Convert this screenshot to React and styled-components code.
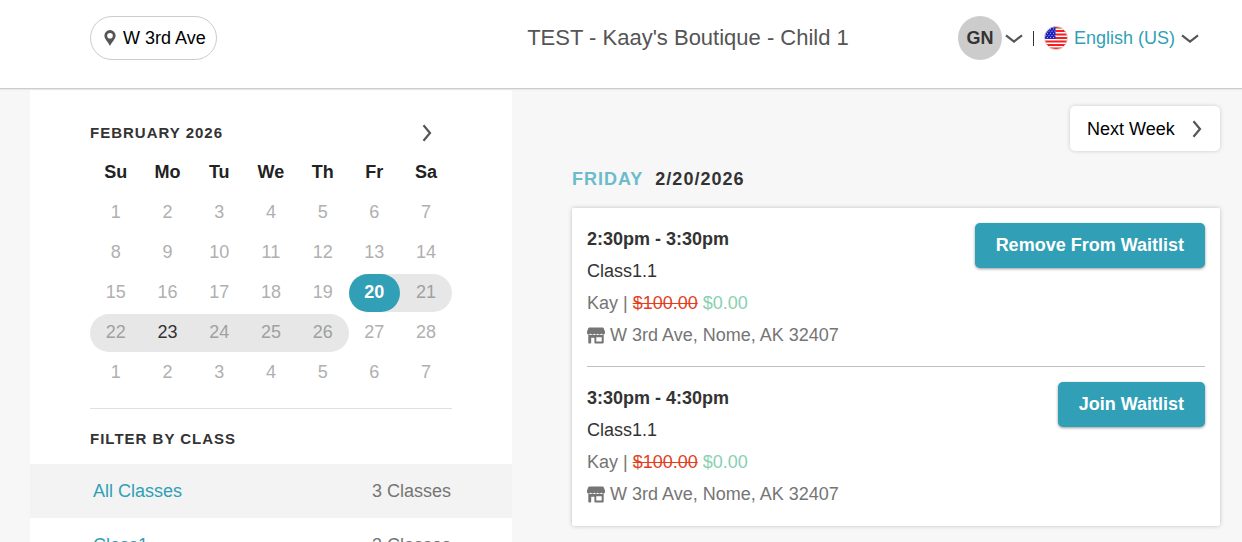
import styled, { createGlobalStyle } from "styled-components"

const GlobalStyle = createGlobalStyle`
    *{
        box-sizing: border-box;
    }
    body{
        margin: 0;
        background-color: #f7f7f7;
        color: #333333;
        font-family: "Liberation Sans", Arial, sans-serif;
        font-size: 18px;
        line-height: 32px;
    }
    button{
        font: inherit;
        color: inherit;
        border: none;
        padding: 0;
        background: none;
        cursor: pointer;
    }
    a{
        color: #319fb6;
        text-decoration: none;
    }
    svg{
        display: block;
        flex-shrink: 0;
    }
`

const Page = styled.div`
    min-height: 100vh;
`

const Header = styled.header`
    display: grid;
    grid-template-columns: 328px 1fr auto;
    align-items: center;
    gap: 16px;
    height: 89px;
    padding: 0 43px 12px 90px;
    background-color: #ffffff;
    border-bottom: 1px solid #cccccc;
    box-shadow: 0 1px 1px #e8e8e8;
    position: relative;
`

const LocationButton = styled.button`
    display: flex;
    align-items: center;
    gap: 7px;
    height: 44px;
    width: 127px;
    padding: 0 13px;
    border: 1px solid #cccccc;
    border-radius: 22px;
    color: #000000;
    white-space: nowrap;
`

const Title = styled.h1`
    margin: 0;
    font-size: 22px;
    font-weight: 400;
    text-align: center;
    color: #555555;
`

const HeaderActions = styled.div`
    display: flex;
    align-items: center;
    gap: 10px;
`

const MenuButton = styled.button`
    display: flex;
    align-items: center;
    gap: ${props => props.$gap}px;
    color: #319fb6;
`

const Avatar = styled.span`
    width: 44px;
    height: 44px;
    border-radius: 50%;
    background-color: #cccccc;
    color: #333333;
    font-weight: 700;
    line-height: 44px;
    text-align: center;
`

const Separator = styled.span`
    width: 1px;
    height: 15px;
    background-color: #333333;
`

const Content = styled.div`
    display: grid;
    grid-template-columns: 482px 1fr;
    padding-left: 30px;
    min-height: calc(100vh - 89px);
`

const Sidebar = styled.aside`
    background-color: #ffffff;
`

const CalendarSection = styled.section`
    margin: 0 60px;
    padding: 26px 0 16px;
    border-bottom: 1px solid #e0e0e0;
`

const CalendarHeader = styled.div`
    display: flex;
    justify-content: space-between;
    align-items: center;
    height: 35px;
    margin-bottom: 2px;
    padding-right: 16px;
`

const SectionTitle = styled.h2`
    margin: 0;
    font-size: 15px;
    font-weight: 700;
    line-height: 32px;
    letter-spacing: 1px;
    text-transform: uppercase;
`

const ArrowButton = styled.button`
    padding: 8px;
    margin-right: -4px;
`

const CalendarTable = styled.table`
    width: 100%;
    table-layout: fixed;
    border-collapse: collapse;
    text-align: center;
    th, td{
        height: 40px;
        padding: 0;
    }
    th{
        color: #222222;
    }
    td{
        padding-top: 2px;
    }
`

const Slot = styled.div`
    height: 38px;
    background-color: ${props => props.$range ? "#e7e7e7" : "transparent"};
    border-radius: ${props => props.$range === "start" ? "19px 0 0 19px" : props.$range === "end" ? "0 19px 19px 0" : "0"};
`

const DayButton = styled.button`
    width: 100%;
    height: 38px;
    padding-bottom: 2px;
    border-radius: 19px;
    line-height: 36px;
    color: ${props => props.$selected ? "#ffffff" : props.$today ? "#333333" : props.$range ? "#a0a0a0" : "#b0b0b0"};
    font-weight: ${props => props.$selected ? 700 : 400};
    background-color: ${props => props.$selected ? "#319fb6" : "transparent"};
`

const FilterSection = styled.section`
    padding-top: 14px;
`

const FilterTitle = styled(SectionTitle)`
    padding: 0 60px;
    margin-bottom: 9px;
`

const FilterList = styled.ul`
    margin: 0;
    padding: 0;
    list-style: none;
`

const FilterRow = styled.li`
    display: flex;
    justify-content: space-between;
    height: 54px;
    padding: 0 61px 0 63px;
    line-height: 54px;
    color: #757575;
    background-color: ${props => props.$active ? "#f3f3f3" : "#ffffff"};
`

const Main = styled.main`
    display: flex;
    flex-direction: column;
    padding: 17px 22px 16px 60px;
`

const NextWeekButton = styled.button`
    display: flex;
    align-items: center;
    justify-content: space-between;
    align-self: flex-end;
    width: 150px;
    height: 45px;
    padding: 0 18px 0 17px;
    border-radius: 5px;
    color: #000000;
    background-color: #ffffff;
    box-shadow: 0 0 4px rgba(0, 0, 0, 0.18);
`

const DateTitle = styled.h2`
    display: flex;
    gap: 12px;
    margin: 12px 0 13px;
    font-size: 18px;
    line-height: 32px;
    letter-spacing: 1px;
`

const DayName = styled.span`
    color: #6bbccb;
    text-transform: uppercase;
`

const Card = styled.section`
    padding: 0 15px;
    border-radius: 2px;
    background-color: #ffffff;
    box-shadow: 0 0 4px rgba(0, 0, 0, 0.22);
`

const ClassRow = styled.article`
    display: flex;
    justify-content: space-between;
    align-items: flex-start;
    padding: 15px 0;
    & + &{
        border-top: 1px solid #c0c0c0;
        padding-bottom: 16px;
    }
`

const ClassTime = styled.h3`
    margin: 0;
    font-size: 18px;
    line-height: 32px;
`

const ClassText = styled.p`
    display: flex;
    align-items: center;
    gap: 5px;
    margin: 0;
    color: ${props => props.$dark ? "#333333" : "#757575"};
`

const OldPrice = styled.del`
    color: #e2401c;
`

const Price = styled.span`
    color: #88d0b0;
`

const WaitlistButton = styled.button`
    height: 45px;
    padding: 0 21px 2px;
    border-radius: 5px;
    color: #ffffff;
    font-weight: 700;
    background-color: #319fb6;
    box-shadow: 0 1px 3px rgba(0, 0, 0, 0.4);
`

const PinIcon = () => (
    <svg width="12" height="16" viewBox="0 0 12 16" fill="#555555" aria-hidden="true">
        <path fillRule="evenodd" d="M6 0a5.6 5.6 0 0 1 5.6 5.6C11.600 9 8.500 11.500 6 16 3.500 11.500.4 9 .4 5.600A5.600 5.600 0 0 1 6 0Zm0 2.900a2.800 2.800 0 1 0 0 5.600 2.800 2.800 0 0 0 0-5.600Z" />
    </svg>
)

const ChevronDown = () => (
    <svg width="18" height="9" viewBox="0 0 18 9" fill="none" stroke="#555555" strokeWidth="2.200" aria-hidden="true">
        <path d="M1 1.300 9 7.500l8-6.200" />
    </svg>
)

const ChevronRight = () => (
    <svg width="10" height="18" viewBox="0 0 10 18" fill="none" stroke="#555555" strokeWidth="2.200" aria-hidden="true">
        <path d="M1.500 1.200 8 9l-6.500 7.800" />
    </svg>
)

const ShopIcon = () => (
    <svg width="18" height="17" viewBox="0 0 18 17" fill="#757575" aria-hidden="true">
        <path d="M2.400.5h13.200c.5 0 .8.200 1 .6L18 4.600v1.200c0 1.200-.9 2-1.900 2-.9 0-1.400-.5-1.800-1.200-.4.700-1 1.200-1.800 1.200S11.100 7.300 10.700 6.600C10.300 7.300 9.800 7.800 9 7.800S7.700 7.300 7.300 6.600C6.900 7.300 6.300 7.800 5.500 7.800S4.100 7.300 3.700 6.600C3.300 7.300 2.800 7.800 1.900 7.800.9 7.800 0 7 0 5.800V4.600L1.400 1.100c.2-.4.500-.6 1-.6Z" />
        <path fillRule="evenodd" d="M1.300 8h15.400v7.600c0 .5-.4.900-.9.900H8.100c-.4 0-.7-.3-.7-.7v-5H4.200v5c0 .4-.3.700-.7.700H2c-.4 0-.7-.3-.7-.7Zm8 2.300v4.200h5.400v-4.200Z" />
    </svg>
)

const FlagIcon = () => (
    <svg width="24" height="24" viewBox="0 0 24 24" aria-hidden="true">
        <clipPath id="flag">
            <circle cx="12" cy="12" r="11.500" />
        </clipPath>
        <g clipPath="url(#flag)">
            <path fill="#ffffff" d="M0 0h24v24H0z" />
            <path stroke="#fa1d1d" strokeWidth="1.850" d="M0 1.500h24M0 5h24M0 8.500h24M0 12h24M0 15.500h24M0 19h24M0 22.500h24" />
            <path fill="#1c1fc0" d="M0 0h11.500v12.800H0z" />
            <path stroke="#c4c6f4" strokeWidth=".9" strokeDasharray="1 2" d="M3 3h8M1.500 5.200h10M3 7.400h8M1.500 9.600h10M3 11.500h8" />
        </g>
        <circle cx="12" cy="12" r="11.500" fill="none" stroke="#d5d5d5" />
    </svg>
)

const weekdays = ["Su", "Mo", "Tu", "We", "Th", "Fr", "Sa"]

const weeks = [
    [1, 2, 3, 4, 5, 6, 7],
    [8, 9, 10, 11, 12, 13, 14],
    [15, 16, 17, 18, 19, 20, 21],
    [22, 23, 24, 25, 26, 27, 28],
    [1, 2, 3, 4, 5, 6, 7],
]

// the visible week goes from the 20th to the 26th and wraps onto a second row
const getRange = day => {
    if (day === 20 || day === 22) return "start"
    if (day === 21 || day === 26) return "end"
    if (day > 22 && day < 26) return "middle"
    return undefined
}

const filters = [
    { name: "All Classes", count: "3 Classes" },
    { name: "Class1", count: "3 Classes" },
]

const classes = [
    { id: 1, time: "2:30pm - 3:30pm", action: "Remove From Waitlist" },
    { id: 2, time: "3:30pm - 4:30pm", action: "Join Waitlist" },
]

const Calendar = () => {
    return <CalendarSection>
        <CalendarHeader>
            <SectionTitle>February 2026</SectionTitle>
            <ArrowButton aria-label="Next month"><ChevronRight /></ArrowButton>
        </CalendarHeader>
        <CalendarTable>
            <thead>
                <tr>{weekdays.map(day => <th key={day}>{day}</th>)}</tr>
            </thead>
            <tbody>
                {
                    weeks.map((week, i) => {
                        return <tr key={i}>
                            {
                                week.map(day => {
                                    const range = getRange(day)
                                    return <td key={day}>
                                        <Slot $range={range}>
                                            <DayButton $range={range} $selected={day === 20} $today={day === 23}>{day}</DayButton>
                                        </Slot>
                                    </td>
                                })
                            }
                        </tr>
                    })
                }
            </tbody>
        </CalendarTable>
    </CalendarSection>
}

const ClassItem = ({ item }) => {
    return <ClassRow>
        <div>
            <ClassTime>{item.time}</ClassTime>
            <ClassText $dark>Class1.1</ClassText>
            <ClassText>Kay | <OldPrice>$100.00</OldPrice> <Price>$0.00</Price></ClassText>
            <ClassText><ShopIcon />W 3rd Ave, Nome, AK 32407</ClassText>
        </div>
        <WaitlistButton>{item.action}</WaitlistButton>
    </ClassRow>
}

const App = () => {
    return <Page>
        <GlobalStyle />
        <Header>
            <LocationButton><PinIcon />W 3rd Ave</LocationButton>
            <Title>TEST - Kaay's Boutique - Child 1</Title>
            <HeaderActions>
                <MenuButton $gap={3} aria-label="Account">
                    <Avatar>GN</Avatar>
                    <ChevronDown />
                </MenuButton>
                <Separator />
                <MenuButton $gap={6}>
                    <FlagIcon />
                    English (US)
                    <ChevronDown />
                </MenuButton>
            </HeaderActions>
        </Header>
        <Content>
            <Sidebar>
                <Calendar />
                <FilterSection>
                    <FilterTitle>Filter by class</FilterTitle>
                    <FilterList>
                        {
                            filters.map((filter, i) => {
                                return <FilterRow key={filter.name} $active={i === 0}>
                                    <a href="#">{filter.name}</a>
                                    <span>{filter.count}</span>
                                </FilterRow>
                            })
                        }
                    </FilterList>
                </FilterSection>
            </Sidebar>
            <Main>
                <NextWeekButton>Next Week <ChevronRight /></NextWeekButton>
                <DateTitle><DayName>Friday</DayName> 2/20/2026</DateTitle>
                <Card>
                    {classes.map(item => <ClassItem key={item.id} item={item} />)}
                </Card>
            </Main>
        </Content>
    </Page>
}

export default App
